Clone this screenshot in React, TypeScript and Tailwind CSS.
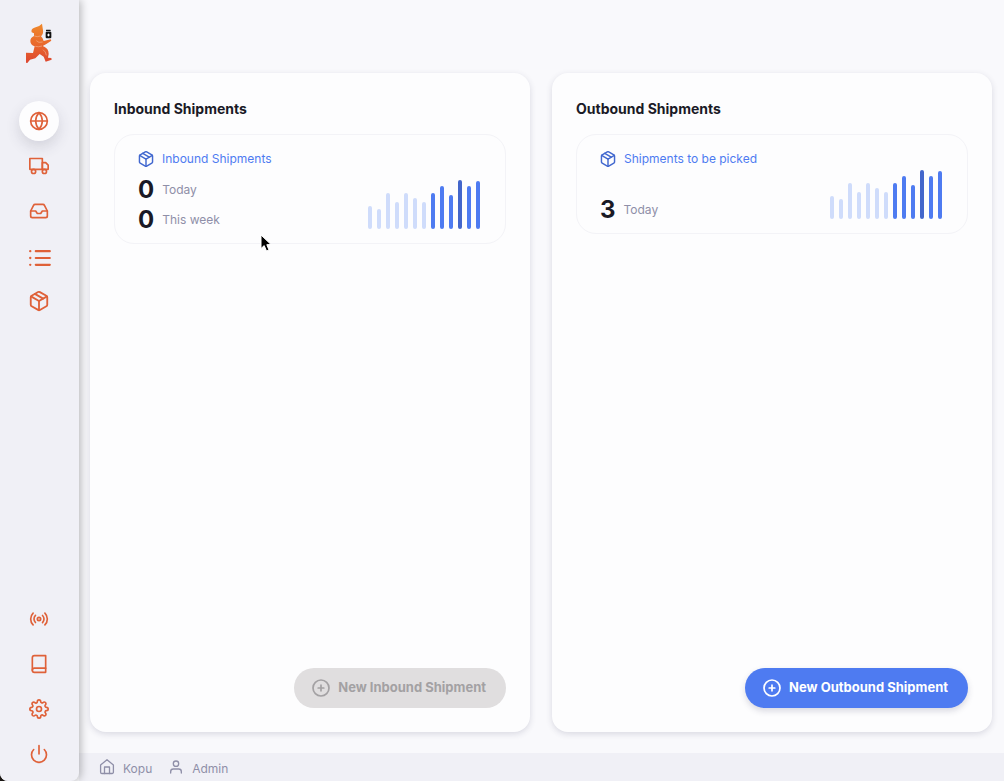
import type { ReactNode } from "react";
import {
  FiBook,
  FiGlobe,
  FiInbox,
  FiPackage,
  FiPower,
  FiRadio,
  FiSettings,
  FiTruck,
  FiUser,
} from "react-icons/fi";

const BAR_HEIGHTS = [23, 20, 36, 27, 36, 31, 27, 36, 43, 34, 49, 43, 48];

function Logo() {
  return (
    <svg width="30" height="42" viewBox="72 65 90 126" role="img" aria-label="Kopu">
      <defs>
        <linearGradient id="runner" x1="0" y1="0" x2="0" y2="1">
          <stop offset="0" stopColor="#ef8a2c" />
          <stop offset="0.5" stopColor="#e96a2c" />
          <stop offset="1" stopColor="#dd4630" />
        </linearGradient>
      </defs>
      <path
        fill="url(#runner)"
        d="M126 70 L129 90 Q131 101 123 108 Q129 113 131 122 L152 117 L154 121 L139 131 L128 137 Q142 142 145 153 Q148 163 144 172 L154 173 L155 178 L137 184 L131 169 L119 161 L106 174 L90 178 L82 188 L78 187 L78 157 L99 158 L104 138 Q91 134 91 122 Q91 112 102 107 L102 99 L95 96 Q92 85 103 82 Q117 80 126 70 Z"
      />
      <path
        d="M103 107 Q112 111 121 107 M109 121 Q115 129 128 125 M106 138 Q115 141 126 137 M129 148 Q138 154 139 165"
        fill="none"
        stroke="#f5c7ad"
        strokeWidth="1.500"
      />
      <rect x="138" y="88" width="14" height="5" rx="1" fill="#111" />
      <rect x="137" y="94" width="17" height="20" rx="3" fill="#111" />
      <path d="M145.500 100v8M141.500 104h8" stroke="#fff" strokeWidth="3" />
    </svg>
  );
}

function ListIcon() {
  return (
    <svg width="24" height="22" viewBox="-1 -4 24 22" fill="none" stroke="currentColor" strokeLinecap="round">
      <path d="M7.800 2.200h14M7.800 9h14M7.800 15.800h14" strokeWidth="2.200" />
      <path d="M2.200 2.200h.1M2.200 9h.1M2.200 15.800h.1" strokeWidth="2.300" />
    </svg>
  );
}

function HomeIcon() {
  return (
    <svg
      width="16"
      height="18"
      viewBox="0 0 16 18"
      fill="none"
      stroke="currentColor"
      strokeWidth="1.300"
      strokeLinecap="round"
      strokeLinejoin="round"
    >
      <path d="M1.600 7 8 1.700 14.400 7v7.200a1.300 1.300 0 0 1-1.300 1.300H2.900a1.300 1.300 0 0 1-1.300-1.300z" />
      <path d="M5.500 15.500V9h5v6.500" />
    </svg>
  );
}

function PlusIcon() {
  return (
    <svg width="18" height="18" viewBox="0 0 18 18" fill="none" stroke="currentColor" strokeWidth="1.700" strokeLinecap="round">
      <circle cx="9" cy="9" r="8" />
      <path d="M9 6.200v5.600M6.200 9h5.600" />
    </svg>
  );
}

function NavButton({ label, active, children }: { label: string; active?: boolean; children: ReactNode }) {
  return (
    <button
      type="button"
      aria-label={label}
      className={
        active
          ? "flex size-10 items-center justify-center rounded-full bg-[#fdfdfe] shadow-[0_6px_14px_rgba(60,60,90,0.16)]"
          : "flex size-10 items-center justify-center rounded-full"
      }
    >
      {children}
    </button>
  );
}

function Sidebar() {
  return (
    <aside className="z-10 flex w-[79px] shrink-0 flex-col items-center justify-between rounded-br-lg bg-[#f0f0f6] pt-[22px] pr-px pb-[7px] text-[#df6139] shadow-[2px_0_9px_rgba(0,0,0,0.26)]">
      <div className="flex flex-col items-center gap-[37px]">
        <Logo />
        <nav className="flex flex-col gap-[5px]">
          <NavButton label="Overview" active><FiGlobe size={20} /></NavButton>
          <NavButton label="Shipping"><FiTruck size={20} /></NavButton>
          <NavButton label="Inbox"><FiInbox size={20} /></NavButton>
          <NavButton label="Lists"><ListIcon /></NavButton>
          <NavButton label="Items"><FiPackage size={22} /></NavButton>
        </nav>
      </div>
      <nav className="flex flex-col gap-[5px]">
        <NavButton label="Sync"><FiRadio size={20} /></NavButton>
        <NavButton label="Docs"><FiBook size={20} /></NavButton>
        <NavButton label="Settings"><FiSettings size={20} /></NavButton>
        <NavButton label="Log out"><FiPower size={20} /></NavButton>
      </nav>
    </aside>
  );
}

function BarChart() {
  return (
    <div className="mb-1.5 flex items-end gap-[5px] self-end">
      {BAR_HEIGHTS.map((height, i) => (
        <span
          key={i}
          className={
            i < 7
              ? "w-1 rounded-full bg-[#cfdcfb]"
              : i === 10
                ? "w-1 rounded-full bg-[#4366cb]"
                : "w-1 rounded-full bg-[#4e7bf1]"
          }
          style={{ height }}
        />
      ))}
    </div>
  );
}

type Stat = { value: number; label: string };

type PanelProps = {
  title: string;
  linkText: string;
  stats: Stat[];
  action: string;
  disabled?: boolean;
};

function Panel({ title, linkText, stats, action, disabled }: PanelProps) {
  return (
    <section className="flex flex-1 flex-col rounded-2xl bg-[#fdfdfe] p-6 shadow-[0_2px_6px_rgba(50,50,90,0.16)]">
      <h2 className="mt-0.5 text-sm leading-5 font-bold text-[#1a1a26]">{title}</h2>
      <div className="mt-[15px] flex min-h-[100px] justify-between rounded-[20px] border border-[#f3f3f7] pt-[14px] pr-[25px] pb-2 pl-[23px]">
        <div className="flex flex-col justify-between gap-1.5">
          <a href="#shipments" className="flex items-center gap-2 text-xs leading-5 text-[#4e7bf1]">
            <FiPackage size={16} viewBox="1 1 22 22" className="text-[#4268cf]" />
            {linkText}
          </a>
          <div>
            {stats.map((stat) => (
              <p key={stat.label} className="flex h-[30px] items-center gap-2">
                <span className="text-2xl font-bold text-[#1a1a26]">{stat.value}</span>
                <span className="text-xs text-[#8f8fa8]">{stat.label}</span>
              </p>
            ))}
          </div>
        </div>
        <BarChart />
      </div>
      <button
        type="button"
        disabled={disabled}
        className={
          disabled
            ? "mt-auto flex h-10 items-center gap-2 self-end rounded-full bg-[#e0dedf] pr-5 pl-[18px] text-[13px] font-bold text-[#a3a1a3]"
            : "mt-auto flex h-10 items-center gap-2 self-end rounded-full bg-[#4e7bf1] pr-5 pl-[18px] text-[13px] font-bold text-white shadow-[0_3px_6px_rgba(50,50,90,0.18)]"
        }
      >
        <PlusIcon />
        {action}
      </button>
    </section>
  );
}

function Cursor() {
  return (
    <svg className="absolute top-[234px] left-[260px] z-20" width="13" height="20" viewBox="0 0 13 20" aria-hidden="true">
      <path
        d="M1 1 L1 14.500 L4.200 11.600 L6.500 17 L9 16 L6.800 10.700 L11 10.500 Z"
        fill="#000"
        stroke="#fff"
        strokeWidth="1"
        strokeLinejoin="round"
      />
    </svg>
  );
}

export default function App() {
  return (
    <div className="bg-[#1b1714] font-['Inter',sans-serif]">
      <div className="relative flex min-h-screen overflow-hidden rounded-bl-lg bg-[#f9f9fc]">
        <Sidebar />
        <div className="flex flex-1 flex-col">
          <main className="flex flex-1 gap-[22px] pt-[73px] pr-3 pb-[21px] pl-[11px]">
            <Panel
              title="Inbound Shipments"
              linkText="Inbound Shipments"
              stats={[
                { value: 0, label: "Today" },
                { value: 0, label: "This week" },
              ]}
              action="New Inbound Shipment"
              disabled
            />
            <Panel
              title="Outbound Shipments"
              linkText="Shipments to be picked"
              stats={[{ value: 3, label: "Today" }]}
              action="New Outbound Shipment"
            />
          </main>
          <footer className="flex h-7 items-center gap-4 bg-[#f0f0f6] pl-5 text-xs text-[#8f8fa8]">
            <span className="flex items-center gap-2">
              <HomeIcon />
              <span className="pt-1">Kopu</span>
            </span>
            <span className="flex items-center gap-2">
              <FiUser size={16} />
              <span className="pt-1">Admin</span>
            </span>
          </footer>
        </div>
        <Cursor />
      </div>
    </div>
  );
}
